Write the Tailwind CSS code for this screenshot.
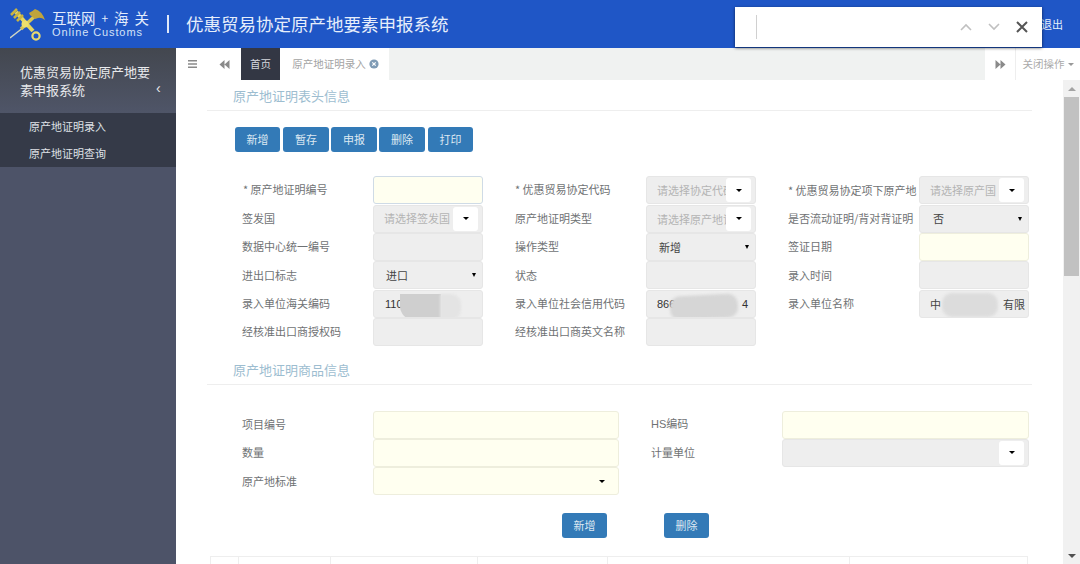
<!DOCTYPE html>
<html lang="zh-CN">
<head>
    <meta charset="UTF-8">
    <title>优惠贸易协定原产地要素申报系统</title>
    <script src="https://cdn.jsdelivr.net/npm/@tailwindcss/browser@4"></script>
</head>
<body class="relative h-[564px] w-[1080px] overflow-hidden bg-white font-['Noto_Sans_CJK_SC','Liberation_Sans',sans-serif] text-[11px] text-[#6f7274]">
    <!-- Header -->
    <header class="flex h-12 items-center bg-[#1f56c6] text-white">
        <svg class="ml-[10px] h-[34px] w-[36px] shrink-0" viewBox="0 0 36 34" fill="none">
            <path d="M0 31 L14 20" stroke="#cfd6c4" stroke-width="1.4"/>
            <path d="M11 22 L26 8" stroke="#d9c654" stroke-width="3.4"/>
            <path d="M6 5 L23 24" stroke="#e6d65f" stroke-width="4"/>
            <path d="M1 8 L7 2 M4 11 L10 5 M7 14 L13 8" stroke="#c9b440" stroke-width="2.6"/>
            <path d="M19 6 Q23 4 25 2 Q32 4 35 13 Q31 10 28 11 L25 12 L20 8Z" fill="#bfa43c"/>
            <circle cx="15" cy="17" r="3.5" fill="#efe06c"/>
            <circle cx="26" cy="29" r="3.6" stroke="#e8da70" stroke-width="2.2"/>
        </svg>
        <div class="ml-[6px] w-[100px] leading-none">
            <div class="flex w-[97px] justify-between whitespace-nowrap text-[14.5px] leading-[17px] text-[#e3ecfb]"><span>互联网</span><span class="text-[12px]">+</span><span>海</span><span>关</span></div>
            <div class="whitespace-nowrap font-['Liberation_Sans',sans-serif] text-[11px] leading-[13px] tracking-[0.9px] text-[#d5e2f7]">Online Customs</div>
        </div>
        <div class="ml-[15px] h-[18px] w-[2px] bg-[#dfe8f8]"></div>
        <h1 class="ml-[17px] whitespace-nowrap text-[17.5px] text-[#e6eefb]">优惠贸易协定原产地要素申报系统</h1>
        <span class="ml-auto mr-[17px] text-[11px] text-[#e6eefb]">退出</span>
    </header>

    <div class="flex h-[516px]">
        <!-- Sidebar -->
        <aside class="w-[176px] shrink-0 bg-[#4d5368]">
            <div class="relative h-[65px] bg-gradient-to-b from-[#43474f] to-[#4f5568] pl-5 pt-[15px] text-[13px] leading-[18px] text-[#e8e9ec]">
                <div class="w-[135px]">优惠贸易协定原产地要素申报系统</div>
                <span class="absolute left-[156px] top-[31px] font-['Liberation_Sans',sans-serif] text-[14px] leading-[18px]">‹</span>
            </div>
            <ul class="h-[54px] bg-[#353a48] text-[11px] text-[#dfe1e6]">
                <li class="flex h-[27px] items-center pl-[29px]">原产地证明录入</li>
                <li class="flex h-[27px] items-center pl-[29px]">原产地证明查询</li>
            </ul>
        </aside>

        <main class="relative min-w-0 flex-1">
            <!-- Tabs -->
            <div class="flex h-8 items-center bg-white text-[10.5px] text-[#999]">
                <div class="flex w-[32px] justify-center">
                    <svg class="h-[10px] w-[11px]" viewBox="0 0 11 10" fill="#8a8a8a"><path d="M1 1h9v1.4H1zM1 4.3h9v1.4H1zM1 7.6h9V9H1z"/></svg>
                </div>
                <div class="flex w-[33px] justify-center">
                    <svg class="h-[9px] w-[11px]" viewBox="0 0 11 9" fill="#8a8a8a"><path d="M5.5 0v9L0.5 4.5zM10.5 0v9L5.5 4.5z"/></svg>
                </div>
                <div class="flex h-8 w-[39px] items-center justify-center bg-[#333744] text-[#d6d8dd]">首页</div>
                <div class="flex h-8 w-[109px] items-center justify-center gap-[3px] pl-[2px] text-[#a3a3a3]">
                    <span>原产地证明录入</span>
                    <svg class="h-[10px] w-[10px]" viewBox="0 0 10 10"><circle cx="5" cy="5" r="4.6" fill="#7f9bb5"/><path d="M3.3 3.3l3.4 3.4M6.7 3.3l-3.4 3.4" stroke="#fff" stroke-width="1.2"/></svg>
                </div>
                <div class="h-8 w-[596px] bg-[#f0f2f1]"></div>
                <div class="flex h-8 w-[30px] items-center justify-center">
                    <svg class="h-[9px] w-[11px]" viewBox="0 0 11 9" fill="#8a8a8a"><path d="M0.5 0v9L5.5 4.5zM5.5 0v9l5-4.5z"/></svg>
                </div>
                <div class="flex h-8 flex-1 items-center justify-center gap-[3px] border-l border-[#eee] whitespace-nowrap text-[#aaa]">关闭操作<span class="h-0 w-0 border-x-[3px] border-t-[3px] border-x-transparent border-t-[#999]"></span></div>
            </div>

            <!-- Content + scrollbar -->
            <div class="flex h-[484px]">
                <div class="w-[887px] shrink-0 overflow-hidden">
                    <section class="ml-[31px] w-[825px]">
                        <h3 class="h-[31px] border-b border-[#eeeeee] pl-[26px] pt-[7px] text-[13px] leading-[18px] text-[#9dbdd0]">原产地证明表头信息</h3>
                        <div class="ml-[28px] mt-4 flex h-[25px] text-[11px] text-[#dce8f2]">
                            <button class="mr-[3px] w-[45px] rounded-[3px] bg-[#337ab7]">新增</button>
                            <button class="mr-[2px] w-[46px] rounded-[3px] bg-[#337ab7]">暂存</button>
                            <button class="mr-[2px] w-[46px] rounded-[3px] bg-[#337ab7]">申报</button>
                            <button class="mr-[3px] w-[46px] rounded-[3px] bg-[#337ab7]">删除</button>
                            <button class="w-[45px] rounded-[3px] bg-[#337ab7]">打印</button>
                        </div>

                        <!-- Header form -->
                        <div class="ml-[35px] mt-[24px] grid w-[819px] grid-cols-[273px_273px_273px] auto-rows-[28.4px]">
                            <div class="flex items-center"><label class="-mt-[1px] w-[131px] whitespace-nowrap pl-[1px]">* 原产地证明编号</label><div class="h-[28px] w-[110px] rounded-[3px] border border-[#cfdbe6] bg-[#fffff0]"></div></div>
                            <div class="flex items-center"><label class="-mt-[1px] w-[131px] whitespace-nowrap">* 优惠贸易协定代码</label><div class="flex h-[28px] w-[110px] items-center justify-between rounded-[3px] border border-[#e6e6e6] bg-[#eeeeee] pl-[10px] pr-[4px] text-[#b4b4b4]"><span class="h-[16px] w-[69px] overflow-hidden whitespace-nowrap leading-[16px]">请选择协定代码</span><span class="flex h-[24px] w-[25px] items-center justify-center rounded-[3px] bg-white"><i class="h-0 w-0 border-x-[3px] border-t-[3px] border-x-transparent border-t-black"></i></span></div></div>
                            <div class="flex items-center"><label class="-mt-[1px] h-[16px] w-[131px] overflow-hidden whitespace-nowrap leading-[16px]">* 优惠贸易协定项下原产地</label><div class="flex h-[28px] w-[110px] items-center justify-between rounded-[3px] border border-[#e6e6e6] bg-[#eeeeee] pl-[10px] pr-[4px] text-[#b4b4b4]"><span class="w-[69px] whitespace-nowrap">请选择原产国</span><span class="flex h-[24px] w-[25px] items-center justify-center rounded-[3px] bg-white"><i class="h-0 w-0 border-x-[3px] border-t-[3px] border-x-transparent border-t-black"></i></span></div></div>

                            <div class="flex items-center"><label class="-mt-[1px] w-[131px]">签发国</label><div class="flex h-[28px] w-[110px] items-center justify-between rounded-[3px] border border-[#e6e6e6] bg-[#eeeeee] pl-[10px] pr-[4px] text-[#b4b4b4]"><span class="w-[66px] whitespace-nowrap">请选择签发国</span><span class="flex h-[24px] w-[25px] items-center justify-center rounded-[3px] bg-white"><i class="h-0 w-0 border-x-[3px] border-t-[3px] border-x-transparent border-t-black"></i></span></div></div>
                            <div class="flex items-center"><label class="-mt-[1px] w-[131px]">原产地证明类型</label><div class="flex h-[28px] w-[110px] items-center justify-between rounded-[3px] border border-[#e6e6e6] bg-[#eeeeee] pl-[10px] pr-[4px] text-[#b4b4b4]"><span class="h-[16px] w-[69px] overflow-hidden whitespace-nowrap leading-[16px]">请选择原产地证</span><span class="flex h-[24px] w-[25px] items-center justify-center rounded-[3px] bg-white"><i class="h-0 w-0 border-x-[3px] border-t-[3px] border-x-transparent border-t-black"></i></span></div></div>
                            <div class="flex items-center"><label class="-mt-[1px] w-[131px] whitespace-nowrap">是否流动证明/背对背证明</label><div class="flex h-[28px] w-[110px] items-center justify-between rounded-[3px] border border-[#e6e6e6] bg-[#eeeeee] pl-[13px] pr-[6px] text-[#444]"><span>否</span><i class="h-0 w-0 border-x-[2.5px] border-t-[4px] border-x-transparent border-t-black"></i></div></div>

                            <div class="flex items-center"><label class="-mt-[1px] w-[131px]">数据中心统一编号</label><div class="h-[28px] w-[110px] rounded-[3px] border border-[#e6e6e6] bg-[#eeeeee]"></div></div>
                            <div class="flex items-center"><label class="-mt-[1px] w-[131px]">操作类型</label><div class="flex h-[28px] w-[110px] items-center justify-between rounded-[3px] border border-[#e6e6e6] bg-[#eeeeee] pl-[12px] pr-[6px] text-[#444]"><span>新增</span><i class="h-0 w-0 border-x-[2.5px] border-t-[4px] border-x-transparent border-t-black"></i></div></div>
                            <div class="flex items-center"><label class="-mt-[1px] w-[131px]">签证日期</label><div class="h-[28px] w-[110px] rounded-[3px] border border-[#eeeedd] bg-[#fffff0]"></div></div>

                            <div class="flex items-center"><label class="-mt-[1px] w-[131px]">进出口标志</label><div class="flex h-[28px] w-[110px] items-center justify-between rounded-[3px] border border-[#e6e6e6] bg-[#eeeeee] pl-[12px] pr-[6px] text-[#444]"><span>进口</span><i class="h-0 w-0 border-x-[2.5px] border-t-[4px] border-x-transparent border-t-black"></i></div></div>
                            <div class="flex items-center"><label class="-mt-[1px] w-[131px]">状态</label><div class="h-[28px] w-[110px] rounded-[3px] border border-[#e6e6e6] bg-[#eeeeee]"></div></div>
                            <div class="flex items-center"><label class="-mt-[1px] w-[131px]">录入时间</label><div class="h-[28px] w-[110px] rounded-[3px] border border-[#e6e6e6] bg-[#eeeeee]"></div></div>

                            <div class="flex items-center"><label class="-mt-[1px] w-[131px]">录入单位海关编码</label><div class="relative flex h-[28px] w-[110px] items-center overflow-hidden rounded-[3px] border border-[#e6e6e6] bg-[#eeeeee] pl-[11px] font-['Liberation_Sans',sans-serif] text-[#333]">110<span class="absolute left-[26px] top-[3px] h-[26px] w-[41px] rounded-bl-[14px] bg-[#cfcfcf]"></span><span class="absolute left-[66px] top-[3px] h-[26px] w-[21px] rounded-r-[10px] bg-[#e4e4e4] blur-[1px]"></span></div></div>
                            <div class="flex items-center"><label class="-mt-[1px] w-[131px] whitespace-nowrap">录入单位社会信用代码</label><div class="relative flex h-[28px] w-[110px] items-center justify-between overflow-hidden rounded-[3px] border border-[#e6e6e6] bg-[#eeeeee] pl-[10px] pr-[7px] font-['Liberation_Sans',sans-serif] text-[#333]"><span>866</span><span>4</span><span class="absolute left-[23px] top-[4px] h-[24px] w-[68px] -rotate-3 rounded-[10px] bg-[#d6d6d6] blur-[1.5px]"></span></div></div>
                            <div class="flex items-center"><label class="-mt-[1px] w-[131px]">录入单位名称</label><div class="relative flex h-[28px] w-[110px] items-center justify-between overflow-hidden rounded-[3px] border border-[#e6e6e6] bg-[#eeeeee] pl-[10px] pr-[1px] text-[#444]"><span>中</span><span class="h-[16px] w-[24px] overflow-hidden whitespace-nowrap leading-[16px]">有限</span><span class="absolute left-[22px] top-[2px] h-[24px] w-[56px] rounded-[10px] bg-[#dcdcdc] blur-[1.5px]"></span></div></div>

                            <div class="flex items-center"><label class="-mt-[1px] w-[131px]">经核准出口商授权码</label><div class="h-[28px] w-[110px] rounded-[3px] border border-[#e6e6e6] bg-[#eeeeee]"></div></div>
                            <div class="flex items-center"><label class="-mt-[1px] w-[131px]">经核准出口商英文名称</label><div class="h-[28px] w-[110px] rounded-[3px] border border-[#e6e6e6] bg-[#eeeeee]"></div></div>
                        </div>

                        <h3 class="mt-[9px] h-[30px] border-b border-[#eeeeee] pl-[26px] pt-[6px] text-[13px] leading-[18px] text-[#9dbdd0]">原产地证明商品信息</h3>

                        <!-- Goods form -->
                        <div class="ml-[35px] mt-[25px] grid w-[819px] grid-cols-[409px_410px] auto-rows-[28.4px]">
                            <div class="flex items-center"><label class="-mt-[1px] w-[131px]">项目编号</label><div class="h-[28px] w-[246px] rounded-[3px] border border-[#eeeedd] bg-[#fffff0]"></div></div>
                            <div class="flex items-center"><label class="-mt-[1px] w-[131px] font-['Liberation_Sans','Noto_Sans_CJK_SC',sans-serif]">HS编码</label><div class="h-[28px] w-[247px] rounded-[3px] border border-[#eeeedd] bg-[#fffff0]"></div></div>
                            <div class="flex items-center"><label class="-mt-[1px] w-[131px]">数量</label><div class="h-[28px] w-[246px] rounded-[3px] border border-[#eeeedd] bg-[#fffff0]"></div></div>
                            <div class="flex items-center"><label class="-mt-[1px] w-[131px]">计量单位</label><div class="flex h-[28px] w-[247px] items-center justify-end rounded-[3px] border border-[#e6e6e6] bg-[#eeeeee] pr-[4px]"><span class="flex h-[24px] w-[25px] items-center justify-center rounded-[3px] bg-white"><i class="h-0 w-0 border-x-[3px] border-t-[3px] border-x-transparent border-t-black"></i></span></div></div>
                            <div class="flex items-center"><label class="-mt-[1px] w-[131px]">原产地标准</label><div class="flex h-[28px] w-[246px] items-center justify-end rounded-[3px] border border-[#eeeedd] bg-[#fffff0] pr-[13px]"><i class="h-0 w-0 border-x-[3px] border-t-[3px] border-x-transparent border-t-black"></i></div></div>
                        </div>

                        <div class="ml-[355px] mt-[17px] flex h-[25px] gap-[57px] text-[11px] text-[#dce8f2]">
                            <button class="w-[45px] rounded-[3px] bg-[#337ab7]">新增</button>
                            <button class="w-[45px] rounded-[3px] bg-[#337ab7]">删除</button>
                        </div>

                        <!-- Table top, cut off by the window -->
                        <div class="ml-[3px] mt-[18px] flex h-[12px] w-[818px] border-t border-[#eeeeee]">
                            <div class="w-[29px] border-x border-[#eeeeee]"></div>
                            <div class="w-[92px] border-r border-[#eeeeee]"></div>
                            <div class="w-[147px] border-r border-[#eeeeee]"></div>
                            <div class="w-[130px] border-r border-[#eeeeee]"></div>
                            <div class="w-[242px] border-r border-[#eeeeee]"></div>
                            <div class="flex-1 border-r border-[#eeeeee]"></div>
                        </div>
                    </section>
                </div>

                <!-- Scrollbar -->
                <div class="ml-auto flex h-full w-[17px] flex-col items-center bg-[#f1f1f1]">
                    <div class="flex h-[17px] items-center"><i class="h-0 w-0 border-x-[4px] border-b-[4px] border-x-transparent border-b-[#a3a3a3]"></i></div>
                    <div class="h-[179px] w-[15px] bg-[#c1c1c1]"></div>
                    <div class="mt-auto flex h-[17px] items-center"><i class="h-0 w-0 border-x-[4px] border-t-[4px] border-x-transparent border-t-[#505050]"></i></div>
                </div>
            </div>
        </main>
    </div>

    <!-- Browser find bar over the page -->
    <div class="absolute left-[735px] top-[7px] flex h-[40px] w-[307px] items-center bg-white shadow-[0_1px_3px_rgba(0,0,0,0.6)]">
        <div class="ml-[21px] h-[24px] w-px bg-[#d0d0d0]"></div>
        <svg class="ml-[203px] h-[8px] w-[12px]" viewBox="0 0 12 8" fill="none"><path d="M1 7l5-5 5 5" stroke="#c0c0c0" stroke-width="1.6"/></svg>
        <svg class="ml-[16px] h-[8px] w-[12px]" viewBox="0 0 12 8" fill="none"><path d="M1 1l5 5 5-5" stroke="#c0c0c0" stroke-width="1.6"/></svg>
        <svg class="ml-[16px] h-[12px] w-[12px]" viewBox="0 0 12 12" fill="none"><path d="M1 1l10 10M11 1L1 11" stroke="#555" stroke-width="2"/></svg>
    </div>
</body>
</html>
